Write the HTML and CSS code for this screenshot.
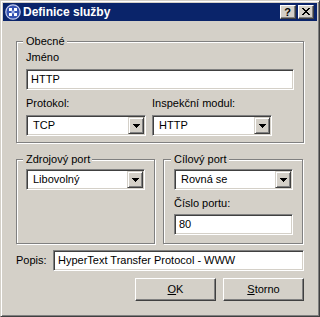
FILE: index.html
```html
<!DOCTYPE html>
<html lang="cs">
<head>
<meta charset="utf-8">
<title>Definice služby</title>
<link rel="stylesheet" href="styles.css">
</head>
<body>
<div class="window">
  <div class="titlebar">
    <svg class="app-icon" width="16" height="16" viewBox="0 0 16 16">
      <circle cx="8" cy="8" r="7.2" fill="#3552b0" stroke="#c4cdf0" stroke-width="1.2"/>
      <path d="M4 4h3v3H4z M9 4h3v3H9z M4 9h3v3H4z M9 9h3v3H9z" fill="#ffffff"/>
      <path d="M6.5 6.5h3v3h-3z" fill="#9fb2ea"/>
    </svg>
    <span class="title">Definice služby</span>
    <div class="caption-buttons">
      <div class="cap-btn help">?</div>
      <div class="cap-btn close">
        <svg width="8" height="7" viewBox="0 0 8 7" shape-rendering="crispEdges"><path d="M0 0h2v1H0z M6 0h2v1H6z M1 1h2v1H1z M5 1h2v1H5z M2 2h4v1H2z M3 3h2v1H3z M2 4h4v1H2z M1 5h2v1H1z M5 5h2v1H5z M0 6h2v1H0z M6 6h2v1H6z" fill="#000"/></svg>
      </div>
    </div>
  </div>

  <div class="client">
    <div class="group general">
      <div class="legend">Obecné</div>
      <div class="label first">Jméno</div>
      <div class="field textbox name-box"><span class="value">HTTP</span></div>
      <div class="pair">
        <div class="col">
          <div class="label">Protokol:</div>
          <div class="field combo"><span class="value">TCP</span><span class="drop"><svg width="7" height="4" viewBox="0 0 7 4" shape-rendering="crispEdges"><path d="M0 0h7v1h-1v1h-1v1h-1v1h-1v-1h-1v-1h-1v-1h-1z" fill="#000"/></svg></span></div>
        </div>
        <div class="col">
          <div class="label">Inspekční modul:</div>
          <div class="field combo"><span class="value">HTTP</span><span class="drop"><svg width="7" height="4" viewBox="0 0 7 4" shape-rendering="crispEdges"><path d="M0 0h7v1h-1v1h-1v1h-1v1h-1v-1h-1v-1h-1v-1h-1z" fill="#000"/></svg></span></div>
        </div>
      </div>
    </div>

    <div class="ports">
      <div class="group src">
        <div class="legend">Zdrojový port</div>
        <div class="field combo first"><span class="value">Libovolný</span><span class="drop"><svg width="7" height="4" viewBox="0 0 7 4" shape-rendering="crispEdges"><path d="M0 0h7v1h-1v1h-1v1h-1v1h-1v-1h-1v-1h-1v-1h-1z" fill="#000"/></svg></span></div>
      </div>
      <div class="group dst">
        <div class="legend">Cílový port</div>
        <div class="field combo first"><span class="value">Rovná se</span><span class="drop"><svg width="7" height="4" viewBox="0 0 7 4" shape-rendering="crispEdges"><path d="M0 0h7v1h-1v1h-1v1h-1v1h-1v-1h-1v-1h-1v-1h-1z" fill="#000"/></svg></span></div>
        <div class="label">Číslo portu:</div>
        <div class="field textbox port-box"><span class="value">80</span></div>
      </div>
    </div>

    <div class="desc-row">
      <span class="desc-label">Popis:</span>
      <div class="field textbox desc-box"><span class="value">HyperText Transfer Protocol - WWW</span></div>
    </div>

    <div class="buttons">
      <div class="push-btn"><span><u>O</u>K</span></div>
      <div class="push-btn"><span><u>S</u>torno</span></div>
    </div>
  </div>
</div>
</body>
</html>
```

FILE: styles.css
```css
* { box-sizing: border-box; }
html, body { margin: 0; padding: 0; }
body {
  background: #d4d0c8;
  font-family: "Liberation Sans", Arial, sans-serif;
  font-size: 11px;
  line-height: 13px;
  color: #000;
}
.window {
  width: 320px;
  height: 317px;
  background: #d4d0c8;
  border: 1px solid;
  border-color: #d4d0c8 #404040 #404040 #d4d0c8;
  box-shadow: inset 1px 1px #ffffff, inset -1px -1px #808080;
  padding: 2px;
  display: flex;
  flex-direction: column;
}
.titlebar {
  height: 18px;
  flex: none;
  background: #0a246a;
  display: flex;
  align-items: center;
  padding: 0 3px 0 2px;
  margin-bottom: 1px;
}
.app-icon { flex: none; display: block; }
.title {
  flex: 1;
  margin-left: 2px;
  color: #fff;
  font-weight: bold;
  font-size: 12px;
  line-height: 18px;
  white-space: nowrap;
}
.caption-buttons { display: flex; gap: 2px; }
.cap-btn {
  width: 16px;
  height: 14px;
  background: #d4d0c8;
  border: 1px solid;
  border-color: #ffffff #404040 #404040 #ffffff;
  box-shadow: inset -1px -1px #808080;
  display: flex;
  align-items: center;
  justify-content: center;
}
.cap-btn.help {
  font-weight: bold;
  font-size: 11px;
  line-height: 12px;
  padding-right: 1px;
}
.cap-btn.close svg { display: block; margin: 0 1px 1px 0; }

.client {
  flex: 1;
  padding: 19px 13px 0 13px;
  display: flex;
  flex-direction: column;
}
.group {
  border: 1px solid #808080;
  box-shadow: inset 1px 1px #ffffff, 1px 1px #ffffff;
}
.legend {
  width: fit-content;
  margin-top: -7px;
  margin-left: -3px;
  padding: 0 2px 0 3px;
  background: #d4d0c8;
  white-space: nowrap;
}
.general { height: 102px; padding: 0 9px; }
.label { margin-top: 7px; white-space: nowrap; }
.label.first { margin-top: 3px; }

.field {
  height: 21px;
  background: #fff;
  border: 1px solid;
  border-color: #808080 #ffffff #ffffff #808080;
  box-shadow: inset 1px 1px #404040, inset -1px -1px #d4d0c8;
  padding: 1px;
  display: flex;
}
.field .value {
  flex: 1;
  line-height: 17px;
  white-space: nowrap;
  overflow: hidden;
}
.textbox .value { padding-left: 3px; }
.combo .value { padding-left: 5px; }
.name-box { margin-top: 5px; }
.pair { display: flex; gap: 6px; margin-top: 0; }
.pair .col { width: 120px; }
.pair .combo { margin-top: 5px; }

.drop {
  width: 16px;
  height: 17px;
  flex: none;
  background: #d4d0c8;
  border: 1px solid;
  border-color: #d4d0c8 #404040 #404040 #d4d0c8;
  box-shadow: inset 1px 1px #ffffff, inset -1px -1px #808080;
  display: flex;
  align-items: center;
  justify-content: center;
}
.drop svg { display: block; margin-left: 0; }

.ports {
  display: flex;
  gap: 8px;
  margin-top: 16px;
  height: 85px;
}
.src { width: 139px; padding: 0 9px; }
.dst { width: 140px; padding: 0 9px 0 10px; }
.combo.first { margin-top: 3px; }
.port-box { margin-top: 4px; }

.desc-row {
  display: flex;
  align-items: center;
  margin-top: 6px;
}
.desc-label { width: 37px; flex: none; }
.desc-box { flex: 1; }

.buttons {
  display: flex;
  justify-content: flex-end;
  gap: 7px;
  margin-top: 7px;
}
.push-btn {
  width: 81px;
  height: 23px;
  background: #d4d0c8;
  border: 1px solid;
  border-color: #ffffff #404040 #404040 #ffffff;
  box-shadow: inset -1px -1px #808080;
  display: flex;
  align-items: center;
  justify-content: center;
}
```
